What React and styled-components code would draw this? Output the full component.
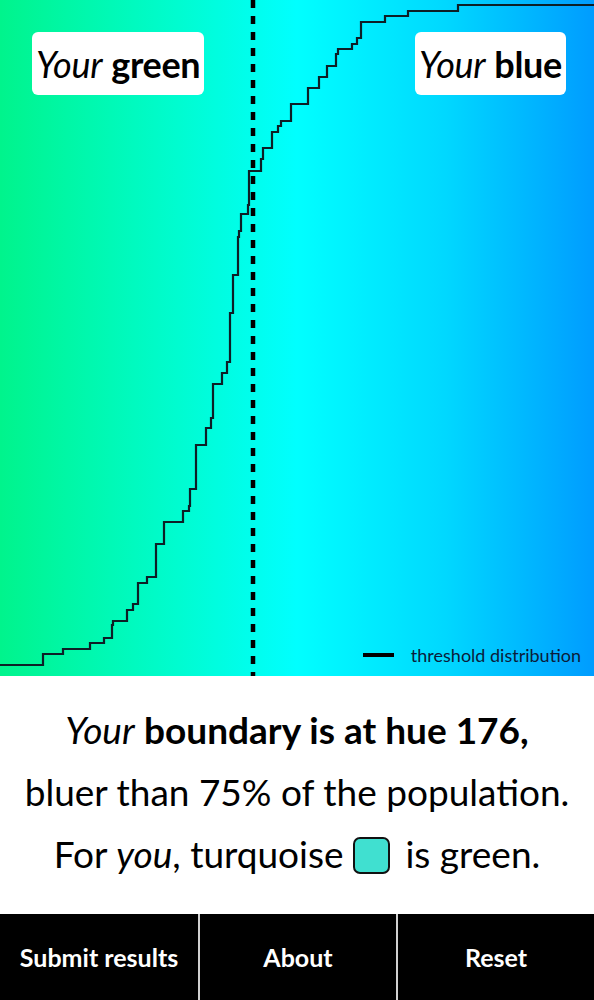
import React from "react";
import styled, { createGlobalStyle } from "styled-components";

const Global = createGlobalStyle`
  html, body { margin: 0; padding: 0; background: #fff; }
  body { font-family: Lato, "Open Sans", sans-serif; color: #000; }
`;

const Page = styled.div`
  width: 594px;
  height: 1000px;
  display: flex;
  flex-direction: column;
  overflow: hidden;
`;

const Chart = styled.div`
  position: relative;
  flex: 0 0 676px;
  background: linear-gradient(to right, #00f48c 0%, #00fcd0 30%, #00ffff 50%, #00d8ff 75%, #009cff 100%);
`;

const Plot = styled.svg`
  display: block;
  width: 100%;
  height: 100%;
`;

const Label = styled.div`
  position: absolute;
  top: 32px;
  ${(p) => (p.$side === "left" ? "left: 32px;" : "right: 28px;")}
  height: 63px;
  padding: 0 4px;
  display: flex;
  align-items: center;
  background: #fff;
  border-radius: 6px;
  font-size: 36px;
  letter-spacing: -0.3px;
  white-space: nowrap;
`;

const Em = styled.i`
  font-style: italic;
  font-weight: 400;
`;

const Strong = styled.b`
  font-weight: 700;
`;

const Legend = styled.div`
  position: absolute;
  right: 13px;
  bottom: 10px;
  display: flex;
  align-items: center;
  gap: 17px;
  font-size: 18px;
  color: #0b1c3a;
`;

const LegendLine = styled.span`
  display: block;
  width: 31px;
  height: 4px;
  background: #000;
`;

const Summary = styled.div`
  flex: 1;
  display: flex;
  flex-direction: column;
  align-items: center;
  justify-content: center;
  padding-bottom: 6px;
  font-size: 37px;
  line-height: 62px;
`;

const Line = styled.div`
  text-align: center;
  white-space: nowrap;
`;

const Swatch = styled.span`
  display: inline-block;
  vertical-align: middle;
  position: relative;
  top: -3px;
  width: 33px;
  height: 33px;
  margin: 0 6px 0 0;
  background: #40e0d0;
  border: 2.5px solid #111;
  border-radius: 7px;
`;

const Bar = styled.nav`
  flex: 0 0 86px;
  display: grid;
  grid-template-columns: 1fr 1fr 1fr;
  background: #000;
`;

const BarButton = styled.button`
  border: none;
  border-left: ${(p) => (p.$first ? "none" : "2px solid #d0d0d0")};
  background: #000;
  color: #fff;
  font-family: Lato, sans-serif;
  font-weight: 700;
  font-size: 25px;
  padding: 0;
  cursor: pointer;
`;

const curve =
  "M0,665 H43 V654 H63 V649 H90 V643 H104 V638 H112 V625 H113 V621 H127 V610 H133 V604 H138 V583 H147 V577 H156 V544 H164 V522 H183 V511 H189 V506 H190 V489 H196 V445 H206 V428 H211 V418 H213 V384 H222 V373 H227 V362 H230 V313 H233 V275 H238 V237 H239 V231 H241 V214 H248 V205 H249 V171 H261 V159 H263 V148 H272 V132 H278 V126 H281 V121 H291 V104 H308 V88 H319 V77 H327 V66 H336 V54 H338 V49 H352 V44 H357 V38 H361 V22 H385 V16 H408 V11 H458 V5 H594";

export default function App() {
  return (
    <>
      <Global />
      <Page>
        <Chart>
          <Plot viewBox="0 0 594 676" preserveAspectRatio="none">
            <path d={curve} fill="none" stroke="#0d1f26" strokeWidth="2.2" />
            <line x1="253" y1="0" x2="253" y2="676" stroke="#000" strokeWidth="4.5" strokeDasharray="8 8" />
          </Plot>
          <Label $side="left">
            <Em>Your</Em>&nbsp;<Strong>green</Strong>
          </Label>
          <Label $side="right">
            <Em>Your</Em>&nbsp;<Strong>blue</Strong>
          </Label>
          <Legend>
            <LegendLine />
            <span>threshold distribution</span>
          </Legend>
        </Chart>
        <Summary>
          <Line>
            <Em>Your</Em> <Strong>boundary is at hue 176,</Strong>
          </Line>
          <Line>bluer than 75% of the population.</Line>
          <Line>
            For <Em>you</Em>, turquoise <Swatch /> is green.
          </Line>
        </Summary>
        <Bar>
          <BarButton $first>Submit results</BarButton>
          <BarButton>About</BarButton>
          <BarButton>Reset</BarButton>
        </Bar>
      </Page>
    </>
  );
}
